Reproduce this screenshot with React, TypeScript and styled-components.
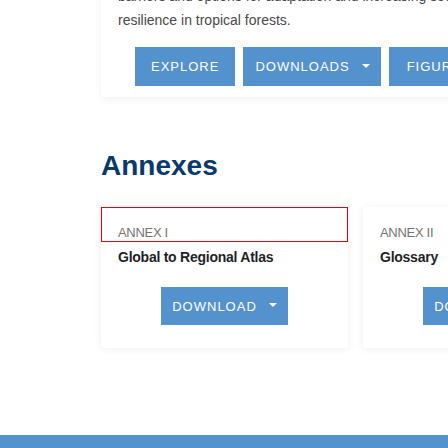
import React from 'react';
import styled, { createGlobalStyle } from 'styled-components';

const GlobalStyle = createGlobalStyle`
    html, body {
        margin: 0;
        padding: 0;
        width: 448px;
        height: 448px;
        overflow: hidden;
        background: #fff;
        font-family: "Liberation Sans", Arial, sans-serif;
    }
`

const Page = styled.div`
    width: 448px;
    height: 448px;
    overflow: hidden;
    display: flex;
    flex-direction: column;
`

const Column = styled.div`
    padding-left: 101px;
    display: flex;
    flex-direction: column;
`

const Hero = styled.section`
    width: 509px;
    margin-top: -36px;
    padding: 20px 17px 11px;
    box-sizing: border-box;
    background: #fff;
    border-radius: 3px;
    box-shadow: 0 2px 8px rgba(0, 0, 0, 0.06);
    p {
        margin: 0;
        font-size: 14px;
        line-height: 24px;
        color: #4a4a4a;
        span {
            display: block;
            white-space: nowrap;
        }
    }
`

const Actions = styled.div`
    display: flex;
    gap: 8px;
    margin: 15px 0 0 17px;
`

const Button = styled.button<{ $pad?: string; $height?: number }>`
    height: ${p => p.$height || 39}px;
    padding: ${p => p.$pad || '0 16px'};
    border: none;
    border-radius: 0;
    background: #5492ce;
    color: #fff;
    font-family: "Liberation Sans", Arial, sans-serif;
    font-size: 13px;
    letter-spacing: 1px;
    text-transform: uppercase;
    display: flex;
    align-items: center;
    gap: 12px;
    flex-shrink: 0;
    white-space: nowrap;
    cursor: pointer;
`

const Caret = styled.span`
    width: 0;
    height: 0;
    margin-top: -2px;
    border-left: 4px solid transparent;
    border-right: 4px solid transparent;
    border-top: 4px solid #fff;
`

const Heading = styled.h2`
    margin: 53px 0 0;
    font-size: 28px;
    line-height: 32px;
    font-weight: 700;
    color: #0a3a6b;
`

const Cards = styled.div`
    display: grid;
    grid-template-columns: 247px 247px;
    gap: 15px;
    margin-top: 25px;
`

const Card = styled.div`
    background: #fff;
    border-radius: 3px;
    box-shadow: 0 1px 8px rgba(0, 0, 0, 0.07);
    padding-bottom: 23px;
    display: flex;
    flex-direction: column;
`

const CardHead = styled.a<{ $focused?: boolean }>`
    display: block;
    padding: 17px 16px 0;
    border: 1px solid ${p => (p.$focused ? '#e8000b' : 'transparent')};
    font-size: 13px;
    line-height: 16px;
    letter-spacing: -0.3px;
    color: #747474;
    text-decoration: none;
`

const CardTitle = styled.h3`
    margin: 5px 0 0;
    padding: 0 17px;
    font-size: 14px;
    line-height: 20px;
    font-weight: 700;
    letter-spacing: -0.25px;
    color: #1f1f29;
`

const CardActions = styled.div`
    display: flex;
    justify-content: center;
    margin-top: 20px;
`

const Footer = styled.footer`
    margin-top: auto;
    height: 13px;
    background: #5492ce;
`

const annexes = [
    { label: 'ANNEX I', title: 'Global to Regional Atlas', focused: true },
    { label: 'ANNEX II', title: 'Glossary', focused: false },
];

function App() {
    return (
        <Page>
            <GlobalStyle />
            <Column>
                <Hero>
                    <p>
                        <span>barriers and options for adaptation and increasing social-ecological</span>
                        <span>resilience in tropical forests.</span>
                    </p>
                    <Actions>
                        <Button>Explore</Button>
                        <Button $pad="0 11px 0 12px">Downloads<Caret /></Button>
                        <Button $pad="0 16px 0 18px">Figures</Button>
                    </Actions>
                </Hero>
                <Heading>Annexes</Heading>
                <Cards>
                    {annexes.map(a => (
                        <Card key={a.label}>
                            <CardHead href="#" $focused={a.focused}>{a.label}</CardHead>
                            <CardTitle>{a.title}</CardTitle>
                            <CardActions>
                                <Button $pad="0 11px" $height={38}>Download<Caret /></Button>
                            </CardActions>
                        </Card>
                    ))}
                </Cards>
            </Column>
            <Footer />
        </Page>
    );
}

export default App;
